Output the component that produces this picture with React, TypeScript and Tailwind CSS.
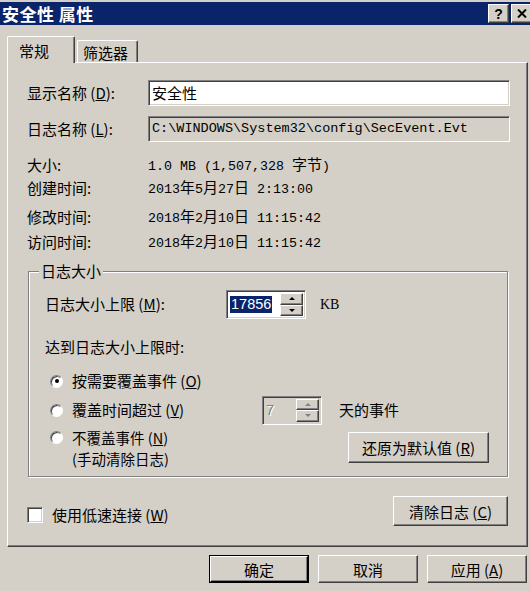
import type { ReactNode } from "react";

const sunken =
  "border border-t-[#808080] border-l-[#808080] border-r-white border-b-white shadow-[inset_1px_1px_0_#404040,inset_-1px_-1px_0_#d4d0c8]";
const raised =
  "border border-t-white border-l-white border-r-[#404040] border-b-[#404040] shadow-[inset_-1px_-1px_0_#808080] bg-[#d4d0c8]";

// CJK runs at full size, latin runs in a half-width mono face (like SimSun)
const Mixed = ({ text }: { text: string }) => {
  const parts = text.split(/([\u4e00-\u9fff]+)/);
  return (
    <>
      {parts.map((p, i) =>
        /[\u4e00-\u9fff]/.test(p) ? (
          <span key={i} className="text-[15px]">
            {p}
          </span>
        ) : (
          <span key={i} className="font-['Liberation_Mono',monospace] text-[13.33px] whitespace-pre">
            {p}
          </span>
        )
      )}
    </>
  );
};

const Arrow = ({ up, disabled }: { up?: boolean; disabled?: boolean }) => (
  <span
    className={
      up
        ? `w-0 h-0 border-x-[3px] border-x-transparent border-b-[3px] ${disabled ? "border-b-[#808080]" : "border-b-black"}`
        : `w-0 h-0 border-x-[3px] border-x-transparent border-t-[3px] ${disabled ? "border-t-[#808080]" : "border-t-black"}`
    }
  />
);

type SpinProps = { value: string; className: string; disabled?: boolean; selected?: boolean };

const Spin = ({ value, className, disabled, selected }: SpinProps) => (
  <div className={`${sunken} flex h-[29px] p-[2px] ${disabled ? "bg-[#d4d0c8]" : "bg-white"} ${className}`}>
    <div className="flex-1 flex items-center pl-[1px] font-['Liberation_Sans',sans-serif] text-[14.5px] leading-none">
      {selected ? (
        <span className="bg-[#0a246a] text-white px-[1px] py-[1px]">{value}</span>
      ) : (
        <span className={disabled ? "text-[#808080] [text-shadow:1px_1px_0_white]" : ""}>{value}</span>
      )}
    </div>
    <div className="flex flex-col w-[23px]">
      <div className={`${raised} flex-1 flex items-center justify-center`}>
        <Arrow up disabled={disabled} />
      </div>
      <div className={`${raised} flex-1 flex items-center justify-center`}>
        <Arrow disabled={disabled} />
      </div>
    </div>
  </div>
);

const Radio = ({ checked }: { checked?: boolean }) => (
  <span className="w-[13px] h-[13px] shrink-0 rounded-full bg-white border border-t-[#808080] border-l-[#808080] border-r-white border-b-white shadow-[inset_1px_1px_0_#404040] flex items-center justify-center">
    {checked && <span className="w-[4px] h-[4px] rounded-full bg-black" />}
  </span>
);

const Btn = ({ children, className }: { children: ReactNode; className: string }) => (
  <button className={`${raised} flex items-center justify-center text-[15px] leading-none ${className}`}>
    {children}
  </button>
);

export default function App() {
  return (
    <div className="w-[530px] h-[591px] overflow-hidden bg-[#d4d0c8] text-black text-[15px] font-['Noto_Sans_CJK_SC',sans-serif]">
      {/* Title bar */}
      <div className="pt-[2px]">
        <div className="h-[23px] bg-[#0a246a] flex items-center pl-[2px]">
          <span className="text-white font-bold text-[17px] leading-none tracking-[0.5px]">安全性 属性</span>
          <div className="ml-auto flex gap-[2px] -mr-[2px]">
            <button className={`${raised} w-[21px] h-[19px] flex items-center justify-center font-['Liberation_Sans',sans-serif] font-bold text-[14px] leading-none`}>
              ?
            </button>
            <button className={`${raised} w-[21px] h-[19px] flex items-center justify-center`}>
              <svg width="10" height="9" viewBox="0 0 10 9">
                <path d="M1 0.5 L9 8.5 M9 0.5 L1 8.5" stroke="black" strokeWidth="2" />
              </svg>
            </button>
          </div>
        </div>
      </div>

      {/* Tabs */}
      <div className="flex items-end pl-[7px] mt-[11px] gap-[2px]">
        <div className="relative z-10 -mb-[1px] h-[27px] w-[68px] bg-[#d4d0c8] border-t border-l border-r border-t-white border-l-white border-r-[#404040] shadow-[inset_-1px_0_0_#808080] rounded-t-[2px] pl-[11px] pt-[5px] leading-[18px]">
          常规
        </div>
        <div className="h-[22px] w-[61px] border-t border-l border-r border-t-white border-l-white border-r-[#404040] shadow-[inset_-1px_0_0_#808080] rounded-t-[2px] pl-[5px] pt-[3px] leading-[18px]">
          筛选器
        </div>
      </div>

      {/* Tab page */}
      <div className="ml-[7px] w-[521px] h-[485px] border border-t-white border-l-white border-r-[#404040] border-b-[#404040] shadow-[inset_-1px_-1px_0_#808080] pl-[19px] pr-[17px] pt-[17px]">
        <div className="flex items-center h-[26px]">
          <span className="w-[121px] shrink-0">
            显示名称 (<u>D</u>):
          </span>
          <div className={`${sunken} flex-1 h-[26px] bg-white flex items-center pl-[3px]`}>安全性</div>
        </div>
        <div className="flex items-center h-[26px] mt-[10px]">
          <span className="w-[121px] shrink-0">
            日志名称 (<u>L</u>):
          </span>
          <div className={`${sunken} flex-1 h-[26px] bg-[#d4d0c8] flex items-center pl-[3px] font-['Liberation_Mono',monospace] text-[13.5px]`}>
            C:\WINDOWS\System32\config\SecEvent.Evt
          </div>
        </div>

        <div className="flex items-center h-[22px] mt-[12px]">
          <span className="w-[121px] shrink-0">大小:</span>
          <span>
            <Mixed text="1.0 MB (1,507,328 字节)" />
          </span>
        </div>
        <div className="flex items-center h-[22px] mt-[1px]">
          <span className="w-[121px] shrink-0">创建时间:</span>
          <span>
            <Mixed text="2013年5月27日 2:13:00" />
          </span>
        </div>
        <div className="flex items-center h-[22px] mt-[7px]">
          <span className="w-[121px] shrink-0">修改时间:</span>
          <span>
            <Mixed text="2018年2月10日 11:15:42" />
          </span>
        </div>
        <div className="flex items-center h-[22px] mt-[3px]">
          <span className="w-[121px] shrink-0">访问时间:</span>
          <span>
            <Mixed text="2018年2月10日 11:15:42" />
          </span>
        </div>

        {/* 日志大小 group */}
        <div className="relative mt-[18px] ml-[1px] mr-[2px] border border-[#808080] shadow-[inset_1px_1px_0_white,1px_1px_0_white] pl-[16px] pr-[18px] pt-[18px] pb-[7px]">
          <span className="absolute -top-[11px] left-[10px] px-[2px] bg-[#d4d0c8] leading-[20px]">日志大小</span>

          <div className="flex items-center h-[29px]">
            <span className="w-[181px] shrink-0">
              日志大小上限 (<u>M</u>):
            </span>
            <Spin value="17856" className="w-[80px]" selected />
            <span className="ml-[14px] font-['Liberation_Serif',serif] text-[14px]">KB</span>
          </div>

          <div className="mt-[18px] leading-[20px]">达到日志大小上限时:</div>

          <div className="mt-[12px] h-[24px] flex items-center">
            <span className="ml-[5px]">
              <Radio checked />
            </span>
            <span className="ml-[9px]">
              按需要覆盖事件 (<u>O</u>)
            </span>
          </div>

          <div className="mt-[2px] h-[30px] flex items-center">
            <div className="w-[217px] shrink-0 flex items-center">
              <span className="ml-[5px]">
                <Radio />
              </span>
              <span className="ml-[9px]">
                覆盖时间超过 (<u>V</u>)
              </span>
            </div>
            <Spin value="7" className="w-[60px]" disabled />
            <span className="ml-[17px]">天的事件</span>
          </div>

          <div className="mt-[2px] flex items-start justify-between">
            <div className="flex items-start">
              <span className="ml-[5px] mt-[4px]">
                <Radio />
              </span>
              <div className="ml-[9px] text-[14.5px] leading-[21px]">
                <div>
                  不覆盖事件 (<u>N</u>)
                </div>
                <div>(手动清除日志)</div>
              </div>
            </div>
            <Btn className="mt-[5px] w-[141px] h-[31px]">
              还原为默认值 (<u>R</u>)
            </Btn>
          </div>
        </div>

        <div className="mt-[19px] flex items-start justify-between pr-[2px]">
          <div className="flex items-center mt-[11px]">
            <span className={`${sunken} w-[16px] h-[16px] bg-white`} />
            <span className="ml-[9px] leading-[16px]">
              使用低速连接 (<u>W</u>)
            </span>
          </div>
          <Btn className="w-[115px] h-[30px]">
            清除日志 (<u>C</u>)
          </Btn>
        </div>
      </div>

      {/* Dialog buttons */}
      <div className="mt-[8px] flex justify-end gap-[9px] pr-[3px]">
        <div className="border border-black">
          <Btn className="w-[98px] h-[26px] border-r-black border-b-black shadow-[inset_-1px_-1px_0_#404040,inset_-2px_-2px_0_#808080]">确定</Btn>
        </div>
        <Btn className="w-[100px] h-[28px]">取消</Btn>
        <Btn className="w-[100px] h-[28px]">
          应用 (<u>A</u>)
        </Btn>
      </div>
    </div>
  );
}
